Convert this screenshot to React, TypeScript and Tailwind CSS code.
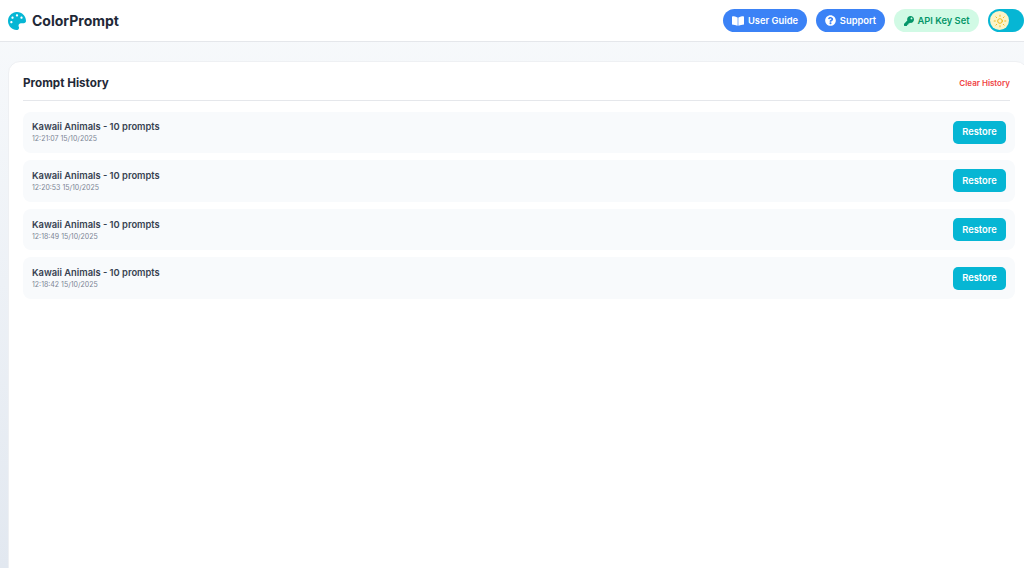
import React from 'react';
import { FaBookOpen, FaKey, FaPalette, FaQuestionCircle } from 'react-icons/fa';
import { Sun } from 'lucide-react';

const historyItems = [
  { id: 1, title: 'Kawaii Animals - 10 prompts', time: '12:21:07 15/10/2025' },
  { id: 2, title: 'Kawaii Animals - 10 prompts', time: '12:20:53 15/10/2025' },
  { id: 3, title: 'Kawaii Animals - 10 prompts', time: '12:18:49 15/10/2025' },
  { id: 4, title: 'Kawaii Animals - 10 prompts', time: '12:18:42 15/10/2025' },
];

const HistoryRow: React.FC<{ title: string; time: string }> = ({ title, time }) => (
  <div className="flex h-[41.67px] items-center justify-between rounded-lg bg-[#f8fafc] px-[9px]">
    <div>
      <p className="text-[9.33px] leading-[14px] font-semibold text-[#374151]">{title}</p>
      <p className="text-[7px] leading-[10px] text-[#7b8494]">{time}</p>
    </div>
    <button className="h-[23px] w-[53px] rounded-[5px] bg-[#06b6d4] text-[9.33px] font-semibold text-white">
      Restore
    </button>
  </div>
);

const App: React.FC = () => {
  return (
    <div className="flex h-[568px] w-[1024px] flex-col overflow-hidden bg-gradient-to-b from-[#f8fafc] to-[#e2e8f0] font-['Inter',sans-serif]">
      {/* Header */}
      <header className="flex h-[42px] shrink-0 items-center justify-between border-b border-[#e5e7eb] bg-white pl-2">
        <div className="flex items-center gap-[6px]">
          <FaPalette className="h-[18px] w-[18px] text-[#06b6d4]" />
          <h1 className="text-[14px] font-bold text-[#1f2937]">ColorPrompt</h1>
        </div>
        <div className="flex items-center gap-[9px]">
          <button className="flex h-[23px] w-[84px] items-center justify-center gap-[4px] rounded-full bg-[#3b82f6] text-[9.33px] font-semibold text-white">
            <FaBookOpen className="h-[12px] w-[12px]" />
            User Guide
          </button>
          <button className="flex h-[23px] w-[69px] items-center justify-center gap-[4px] rounded-full bg-[#3b82f6] text-[9.33px] font-semibold text-white">
            <FaQuestionCircle className="h-[11px] w-[11px]" />
            Support
          </button>
          <div className="flex h-[23px] w-[85px] items-center justify-center gap-[4px] rounded-full bg-[#d1fae5] text-[9.33px] font-semibold text-[#059669]">
            <FaKey className="h-[10px] w-[10px]" />
            API Key Set
          </div>
          <div className="flex h-[23px] w-[36px] shrink-0 items-center rounded-full bg-[#06b6d4] pl-[2px]">
            <span className="flex h-[19px] w-[19px] items-center justify-center rounded-full bg-[#fdf3c7]">
              <Sun className="h-[14px] w-[14px] text-[#eab308]" strokeWidth={1.5} />
            </span>
          </div>
        </div>
      </header>

      {/* History card */}
      <main className="flex-1 pl-2 pt-[19px]">
        <div className="h-[520px] w-[1020px] rounded-xl border border-[#eef0f3] bg-white pl-[14px] pr-[12px] pt-[12px]">
          <div className="mr-[5px] flex h-[27px] items-center justify-between border-b border-[#e5e7eb] pb-[7px]">
            <h2 className="text-[11.67px] font-bold text-[#1f2937]">Prompt History</h2>
            <button className="-mt-[2px] text-[8px] font-semibold text-[#ef4444]">Clear History</button>
          </div>
          <div className="mt-[10.5px] flex flex-col gap-[7px]">
            {historyItems.map(item => (
              <HistoryRow key={item.id} title={item.title} time={item.time} />
            ))}
          </div>
        </div>
      </main>
    </div>
  );
};

export default App;
